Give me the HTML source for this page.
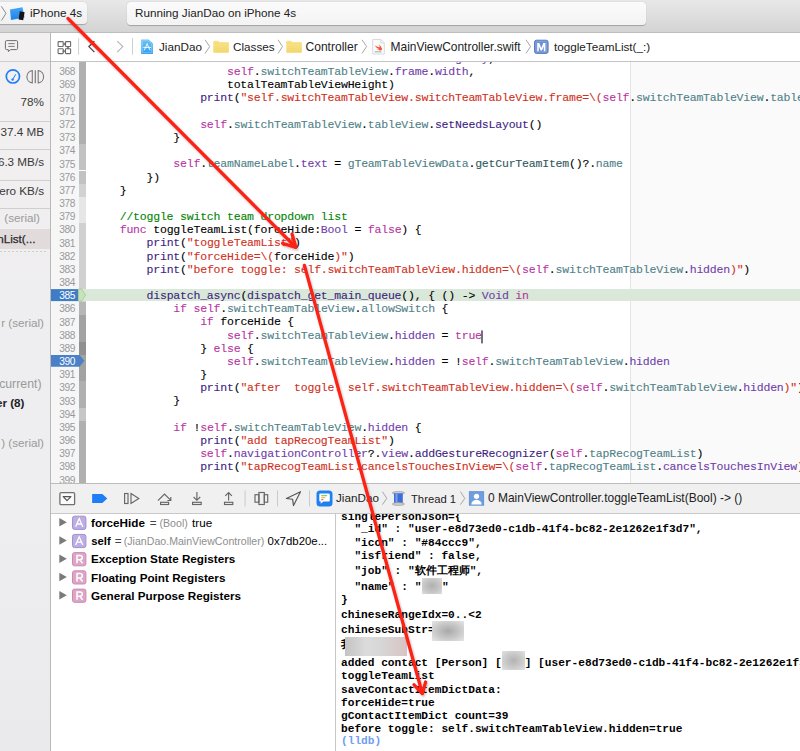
<!DOCTYPE html>
<html><head><meta charset="utf-8">
<style>
*{box-sizing:border-box;margin:0;padding:0}
html,body{width:800px;height:751px;overflow:hidden;background:#fff}
body{position:relative;font-family:"Liberation Sans",sans-serif;font-size:11.7px;color:#222}
.abs{position:absolute}
/* toolbar */
#tb{position:absolute;left:0;top:0;width:800px;height:33px;background:linear-gradient(#e8e8e8,#d4d4d4);border-bottom:1px solid #bdbdbd}
#scheme{position:absolute;left:-6px;top:2px;width:93px;height:22px;border-radius:4px;background:linear-gradient(#f8f8f8,#f0f0f0);box-shadow:0 0.5px 1px rgba(0,0,0,.25)}
#status{position:absolute;left:127px;top:2px;width:519px;height:23px;border-radius:4px;background:linear-gradient(#fbfbfb,#f3f3f3);box-shadow:0 0.5px 1px rgba(0,0,0,.25)}
.ui{position:absolute;white-space:pre;font-family:"Liberation Sans",sans-serif;font-size:11.7px;color:#262626;line-height:14px}
/* left panel */
#lp{position:absolute;left:0;top:33px;width:51px;height:718px;background:linear-gradient(#f2f0f0 0px,#f1eff0 120px,#eeedef 310px,#eeedf0 490px,#eaeaec 718px);border-right:1px solid #b9b9b9;overflow:hidden}
.hl{position:absolute;left:0;width:50px;height:1px;background:#cfcfcf}
.rt{position:absolute;right:6px;white-space:pre;font-size:11.7px;color:#3a3a3a;line-height:14px}
/* jump bar */
#jb{position:absolute;left:51px;top:33px;width:749px;height:29px;background:#fff;border-bottom:1px solid #c4c4c4}
/* editor */
#ed{position:absolute;left:51px;top:62px;width:749px;height:422px;background:#fff;overflow:hidden}
#gut{position:absolute;left:0;top:0;width:28px;height:422px;background:#f6f6f6}
.ln{position:absolute;left:0;margin-top:0.2px;width:24.2px;text-align:right;height:13.17px;line-height:13.17px;font-family:"Liberation Sans",sans-serif;font-size:10.2px;letter-spacing:-0.35px;color:#999}
.rb{position:absolute;left:28px;width:7px;height:13.17px}
#code{position:absolute;left:0;top:0;width:749px;height:422px}
.cl{position:absolute;left:41.86px;white-space:pre;font-family:"Liberation Mono",monospace;font-size:11.5px;letter-spacing:-0.196px;line-height:13.17px;height:13.17px;color:#000;-webkit-text-stroke:0.1px}
/* debug bar */
#db{position:absolute;left:51px;top:483px;width:749px;height:31px;background:#f0f0f0;border-top:1px solid #bcbcbc;border-bottom:1px solid #c9c9c9}
/* variables */
#vars{position:absolute;left:51px;top:514px;width:285px;height:237px;background:#fff;border-right:1px solid #c8c8c8}
.vr{position:absolute;left:0;height:18px;white-space:pre;font-size:11.7px;line-height:14px;color:#000}
#con{position:absolute;left:336px;top:514px;width:464px;height:237px;background:#fff;overflow:hidden}
.co{position:absolute;left:5px;white-space:pre;font-family:"Liberation Mono",monospace;font-weight:bold;font-size:11.16px;line-height:13px;color:#000}
</style></head><body>

<div id="tb">
  <div id="scheme"></div>
  <div id="status"></div>
  <svg class="abs" style="left:0;top:0" width="30" height="32" viewBox="0 0 30 32">
    <path d="M1.3 6.3 L6 13.3 L1.5 20.5" fill="none" stroke="#8a8a8a" stroke-width="1"/>
    <defs><linearGradient id="xg" x1="0" y1="0" x2="0" y2="1"><stop offset="0" stop-color="#45a6f6"/><stop offset="1" stop-color="#1f80ea"/></linearGradient></defs>
    <path d="M10 9.5 L22.5 7.2 L24.5 17.5 L11 20 Z" fill="url(#xg)"/>
    <path d="M19.8 11.3 L24.6 12.3 L23.2 20.2 L18.6 19.4 Z" fill="#151515"/>
  </svg>
  <div class="ui" style="left:30px;top:6.4px;font-size:11.7px;color:#222">iPhone 4s</div>
  <div class="ui" style="left:135px;top:6.2px;font-size:11.7px;color:#222">Running JianDao on iPhone 4s</div>
</div>

<div id="lp">
  <svg class="abs" style="left:0;top:0" width="50" height="60" viewBox="0 0 50 60">
    <path d="M6.6 7.6 H16.4 Q17.6 7.6 17.6 8.8 V15.4 Q17.6 16.6 16.4 16.6 H10.6 L8.4 18.6 L8.3 16.6 H6.6 Q5.4 16.6 5.4 15.4 V8.8 Q5.4 7.6 6.6 7.6 Z" fill="none" stroke="#6f6f6f" stroke-width="1"/>
    <path d="M8.3 10.6 H14.7 M8.3 13.4 H14.7" stroke="#6f6f6f" stroke-width="0.9"/>
    <circle cx="12.9" cy="43.4" r="6.6" fill="none" stroke="#1f7ef5" stroke-width="1.7"/>
    <path d="M12.6 46.6 L15.8 41.2" stroke="#1f7ef5" stroke-width="1"/>
    <circle cx="12.6" cy="46.6" r="1.2" fill="#1f7ef5"/>
    <path d="M32.3 37.6 A6.2 6.2 0 0 0 32.3 49.9 Z" fill="none" stroke="#7a7a7a" stroke-width="1.1"/>
    <path d="M38.2 37.6 A6.2 6.2 0 0 1 38.2 49.9 Z" fill="none" stroke="#7a7a7a" stroke-width="1.1"/>
    <rect x="34.7" y="37.3" width="1.2" height="12.9" fill="#7a7a7a"/>
  </svg>
  <div class="hl" style="top:28px"></div>
  <div class="rt" style="top:61.5px">78%</div>
  <div class="hl" style="top:88px"></div>
  <div class="rt" style="top:91.5px">37.4 MB</div>
  <div class="hl" style="top:116px"></div>
  <div class="rt" style="top:121.5px">6.3 MB/s</div>
  <div class="hl" style="top:147px"></div>
  <div class="rt" style="top:150.5px">Zero KB/s</div>
  <div class="hl" style="top:175px"></div>
  <div class="rt" style="top:177.5px;color:#9a9a9a;right:10px">(serial)</div>
  <div class="abs" style="left:0;top:196px;width:50px;height:20px;background:#e2dbdc"></div>
  <div class="rt" style="top:198.5px;color:#2a2a2a;right:14.5px;-webkit-text-stroke:0.25px">nList(...</div>
  <div class="abs" style="left:0;top:217.5px;width:46px;height:1px;background:repeating-linear-gradient(90deg,#cfcfcf 0 2px,transparent 2px 4px)"></div>
  <div class="rt" style="top:282.5px;color:#9a9a9a;right:6px">r (serial)</div>
  <div class="rt" style="top:343.5px;color:#9a9a9a;right:8.5px;font-size:12.3px">current)</div>
  <div class="rt" style="top:362.5px;color:#222;right:25.5px;font-weight:bold">er (8)</div>
  <div class="rt" style="top:402.5px;color:#9a9a9a;right:6px">) (serial)</div>
</div>

<div id="jb">
  <svg class="abs" style="left:0;top:0" width="749" height="29" viewBox="0 0 749 29">
    <g fill="none" stroke="#6b6b6b" stroke-width="1.1">
      <rect x="7.1" y="8.6" width="5.1" height="4.9" rx="0.6"/>
      <rect x="14.5" y="8.6" width="5.1" height="4.9" rx="0.6"/>
      <rect x="7.1" y="15.7" width="5.1" height="4.9" rx="0.6"/>
      <rect x="14.5" y="15.7" width="5.1" height="4.9" rx="0.6"/>
      <path d="M12.2 11 H14.5 M13.5 10 L14.5 11 L13.5 12 M17 13.5 V15.7 M16 14.7 L17 15.7 L18 14.7 M14.5 18.2 H12.2 M13.2 17.2 L12.2 18.2 L13.2 19.2"/>
    </g>
    <rect x="27.1" y="5.2" width="1" height="16.5" fill="#d0d0d0"/>
    <path d="M43.4 8.2 L37.9 13.6 L43.4 19.1" fill="none" stroke="#4a4a4a" stroke-width="1.3"/>
    <path d="M66.2 8.2 L71.8 13.6 L66.2 19.1" fill="none" stroke="#b3b3b3" stroke-width="1.1"/>
    <rect x="81" y="5.2" width="1" height="16.5" fill="#d0d0d0"/>
    <defs>
      <linearGradient id="apg" x1="0" y1="0" x2="0" y2="1"><stop offset="0" stop-color="#6cc3f7"/><stop offset="1" stop-color="#2f9ef0"/></linearGradient>
      <linearGradient id="fdg" x1="0" y1="0" x2="0" y2="1"><stop offset="0" stop-color="#f9e48c"/><stop offset="1" stop-color="#f3d66a"/></linearGradient>
    </defs>
    <path d="M90.2 6.4 H97.6 L101.9 10.4 V21 H90.2 Z" fill="url(#apg)"/>
    <path d="M91.5 7.7 H97 L100.6 11 V19.7 H91.5 Z" fill="none" stroke="#a9dcfb" stroke-width="0.6" opacity="0.8"/>
    <g fill="none" stroke="#fff" stroke-width="0.9" stroke-linecap="round"><path d="M93.4 17 L96.1 10.9 M96.1 10.9 L98.9 17 M92.6 14.4 H99.6"/></g>
    <path d="M154 6.8 L158.7 13.5 L154 20.5" fill="none" stroke="#a6a6a6" stroke-width="1"/>
    <path d="M162.3 8.6 Q162.3 7.8 163.1 7.8 H167.2 L168.4 9.2 H177.2 Q177.9 9.2 177.9 10 V19.1 Q177.9 19.8 177.2 19.8 H163 Q162.3 19.8 162.3 19.1 Z" fill="url(#fdg)"/>
    <rect x="162.3" y="9.6" width="15.6" height="0.8" fill="#f0d56a" opacity="0.6"/>
    <path d="M227 6.8 L231.5 13.5 L227 20.5" fill="none" stroke="#a6a6a6" stroke-width="1"/>
    <path d="M235.3 8.6 Q235.3 7.8 236.1 7.8 H240.2 L241.4 9.2 H250.2 Q250.9 9.2 250.9 10 V19.1 Q250.9 19.8 250.2 19.8 H236 Q235.3 19.8 235.3 19.1 Z" fill="url(#fdg)"/>
    <rect x="235.3" y="9.6" width="15.6" height="0.8" fill="#f0d56a" opacity="0.6"/>
    <path d="M311 6.8 L315.6 13.5 L311 20.5" fill="none" stroke="#a6a6a6" stroke-width="1"/>
    <path d="M321.7 6.5 H329.8 L333.3 10 V21 H321.7 Z" fill="#fcfcfc" stroke="#d6d6d6" stroke-width="0.9"/>
    <path d="M329.8 6.5 V10 H333.3" fill="none" stroke="#d6d6d6" stroke-width="0.9"/>
    <path d="M323.6 12.6 Q325.5 15.5 328.5 16.2 Q326 16.8 324.5 15.6 Q327 17.8 330.2 17.3 Q331.3 16.8 331 15.8 Q330.3 13.4 327.8 11 Q329.2 13.6 328.4 14.6 Q326 13.6 323.6 12.6 Z" fill="#f05138"/>
    <rect x="323.6" y="18.4" width="7" height="0.9" fill="#9a9a9a"/>
    <path d="M475 6.8 L479.5 13.5 L475 20.5" fill="none" stroke="#a6a6a6" stroke-width="1"/>
    <rect x="483.5" y="7.2" width="13.6" height="13.2" rx="2" fill="#6d90d2" stroke="#5a7fc5" stroke-width="1"/>
    <rect x="485" y="8.7" width="10.6" height="10.2" rx="1" fill="none" stroke="#8eabe0" stroke-width="0.7"/>
    <path d="M486.2 18.2 V10.1 H488.3 L490.3 14.9 L492.3 10.1 H494.4 V18.2 H492.8 V13.2 L491 17.4 H489.6 L487.8 13.2 V18.2 Z" fill="#fff"/>
  </svg>
  <div class="ui" style="left:108px;top:7px;color:#222">JianDao</div>
  <div class="ui" style="left:182px;top:7px;color:#222">Classes</div>
  <div class="ui" style="left:254.5px;top:7px;color:#222;font-size:12.05px">Controller</div>
  <div class="ui" style="left:339.5px;top:7px;color:#222;font-size:11.98px">MainViewController.swift</div>
  <div class="ui" style="left:503px;top:7px;color:#222">toggleTeamList(_:)</div>
</div>

<div id="ed">
  <div class="abs" style="left:579px;top:0;width:170px;height:422px;background:#fafafa;border-left:1px solid #e4e4e4"></div>
  <div id="gut"></div>
<div class="rb" style="top:-10.03px;background:#b0b0b0"></div>
<div class="rb" style="top:3.14px;background:#b0b0b0"></div>
<div class="rb" style="top:16.31px;background:#b0b0b0"></div>
<div class="rb" style="top:29.48px;background:#b0b0b0"></div>
<div class="rb" style="top:42.65px;background:#b0b0b0"></div>
<div class="rb" style="top:55.82px;background:#b0b0b0"></div>
<div class="rb" style="top:68.99px;background:#b0b0b0"></div>
<div class="rb" style="top:82.16px;background:#c2c2c2"></div>
<div class="rb" style="top:95.33px;background:#c2c2c2"></div>
<div class="rb" style="top:108.50px;background:#c2c2c2"></div>
<div class="rb" style="top:121.67px;background:#d2d2d2"></div>
<div class="rb" style="top:134.84px;background:#e6e6e6"></div>
<div class="rb" style="top:148.01px;background:#e6e6e6"></div>
<div class="rb" style="top:161.18px;background:#d0d0d0"></div>
<div class="rb" style="top:174.35px;background:#d0d0d0"></div>
<div class="rb" style="top:187.52px;background:#d0d0d0"></div>
<div class="rb" style="top:200.69px;background:#d0d0d0"></div>
<div class="rb" style="top:213.86px;background:#d0d0d0"></div>
<div class="rb" style="top:227.03px;background:#d0d0d0"></div>
<div class="rb" style="top:240.20px;background:#b6b6b6"></div>
<div class="rb" style="top:253.37px;background:#a2a2a2"></div>
<div class="rb" style="top:266.54px;background:#a2a2a2"></div>
<div class="rb" style="top:279.71px;background:#909090"></div>
<div class="rb" style="top:292.88px;background:#a2a2a2"></div>
<div class="rb" style="top:306.05px;background:#a2a2a2"></div>
<div class="rb" style="top:319.22px;background:#b0b0b0"></div>
<div class="rb" style="top:332.39px;background:#b0b0b0"></div>
<div class="rb" style="top:345.56px;background:#c6c6c6"></div>
<div class="rb" style="top:358.73px;background:#b0b0b0"></div>
<div class="rb" style="top:371.90px;background:#b0b0b0"></div>
<div class="rb" style="top:385.07px;background:#b0b0b0"></div>
<div class="rb" style="top:398.24px;background:#b0b0b0"></div>
<div class="rb" style="top:411.41px;background:#b0b0b0"></div>
  <div class="abs" style="left:28px;top:227.1px;width:721px;height:12px;background:#d9e8d8"></div>
  <svg class="abs" style="left:0;top:0" width="40" height="422" viewBox="0 0 40 422">
    <path d="M0 227.1 H27.6 V239.1 H0 Z" fill="#3f7cc6"/>
    <path d="M27.4 227.1 H30.8 L34.6 233.1 L30.8 239.1 H27.4 Z" fill="#c7e3b9" stroke="#9fc48f" stroke-width="0.7"/>
    <path d="M0 292.9 H28.5 L33.4 298.8 L28.5 304.75 H0 Z" fill="#4a80c6"/>
  </svg>
  <div class="abs" style="left:0;top:0">
<div class="ln" style="top:-10.03px">367</div>
<div class="ln" style="top:3.14px">368</div>
<div class="ln" style="top:16.31px">369</div>
<div class="ln" style="top:29.48px">370</div>
<div class="ln" style="top:42.65px">371</div>
<div class="ln" style="top:55.82px">372</div>
<div class="ln" style="top:68.99px">373</div>
<div class="ln" style="top:82.16px">374</div>
<div class="ln" style="top:95.33px">375</div>
<div class="ln" style="top:108.50px">376</div>
<div class="ln" style="top:121.67px">377</div>
<div class="ln" style="top:134.84px">378</div>
<div class="ln" style="top:148.01px">379</div>
<div class="ln" style="top:161.18px">380</div>
<div class="ln" style="top:174.35px">381</div>
<div class="ln" style="top:187.52px">382</div>
<div class="ln" style="top:200.69px">383</div>
<div class="ln" style="top:213.86px">384</div>
<div class="ln" style="top:227.03px;color:#fff">385</div>
<div class="ln" style="top:240.20px">386</div>
<div class="ln" style="top:253.37px">387</div>
<div class="ln" style="top:266.54px">388</div>
<div class="ln" style="top:279.71px">389</div>
<div class="ln" style="top:292.88px;color:#fff">390</div>
<div class="ln" style="top:306.05px">391</div>
<div class="ln" style="top:319.22px">392</div>
<div class="ln" style="top:332.39px">393</div>
<div class="ln" style="top:345.56px">394</div>
<div class="ln" style="top:358.73px">395</div>
<div class="ln" style="top:371.90px">396</div>
<div class="ln" style="top:385.07px">397</div>
<div class="ln" style="top:398.24px">398</div>
<div class="ln" style="top:411.41px">399</div>
  </div>
  <div id="code">
<div class="cl" style="top:-10.03px">                    <span style="color:#b833a1">self</span>.<span style="color:#4f8187">switchTeamTableView</span>.<span style="color:#703daa">frame</span>.<span style="color:#703daa">origin</span>.<span style="color:#703daa">y</span>,</div>
<div class="cl" style="top:3.14px">                    <span style="color:#b833a1">self</span>.<span style="color:#4f8187">switchTeamTableView</span>.<span style="color:#703daa">frame</span>.<span style="color:#703daa">width</span>,</div>
<div class="cl" style="top:16.31px">                    totalTeamTableViewHeight)</div>
<div class="cl" style="top:29.48px">                <span style="color:#3e1e81">print</span>(<span style="color:#d12f1b">&quot;self.switchTeamTableView.switchTeamTableView.frame=\(</span><span style="color:#b833a1">self</span>.<span style="color:#4f8187">switchTeamTableView</span>.<span style="color:#4f8187">tableView</span>.<span style="color:#703daa">frame</span><span style="color:#d12f1b">)&quot;</span>)</div>
<div class="cl" style="top:42.65px"></div>
<div class="cl" style="top:55.82px">                <span style="color:#b833a1">self</span>.<span style="color:#4f8187">switchTeamTableView</span>.<span style="color:#4f8187">tableView</span>.<span style="color:#3e1e81">setNeedsLayout</span>()</div>
<div class="cl" style="top:68.99px">            }</div>
<div class="cl" style="top:82.16px"></div>
<div class="cl" style="top:95.33px">            <span style="color:#b833a1">self</span>.<span style="color:#4f8187">teamNameLabel</span>.<span style="color:#703daa">text</span> = <span style="color:#4f8187">gTeamTableViewData</span>.<span style="color:#31595d">getCurTeamItem</span>()?.<span style="color:#4f8187">name</span></div>
<div class="cl" style="top:108.50px">        })</div>
<div class="cl" style="top:121.67px">    }</div>
<div class="cl" style="top:134.84px"></div>
<div class="cl" style="top:148.01px">    <span style="color:#008400">//toggle switch team dropdown list</span></div>
<div class="cl" style="top:161.18px">    <span style="color:#b833a1">func</span> toggleTeamList(forceHide:<span style="color:#703daa">Bool</span> = <span style="color:#b833a1">false</span>) {</div>
<div class="cl" style="top:174.35px">        <span style="color:#3e1e81">print</span>(<span style="color:#d12f1b">&quot;toggleTeamList&quot;</span>)</div>
<div class="cl" style="top:187.52px">        <span style="color:#3e1e81">print</span>(<span style="color:#d12f1b">&quot;forceHide=\(</span>forceHide<span style="color:#d12f1b">)&quot;</span>)</div>
<div class="cl" style="top:200.69px">        <span style="color:#3e1e81">print</span>(<span style="color:#d12f1b">&quot;before toggle: self.switchTeamTableView.hidden=\(</span><span style="color:#b833a1">self</span>.<span style="color:#4f8187">switchTeamTableView</span>.<span style="color:#703daa">hidden</span><span style="color:#d12f1b">)&quot;</span>)</div>
<div class="cl" style="top:213.86px"></div>
<div class="cl" style="top:227.03px">        <span style="color:#3e1e81">dispatch_async</span>(<span style="color:#3e1e81">dispatch_get_main_queue</span>(), { () -> <span style="color:#703daa">Void</span> <span style="color:#b833a1">in</span></div>
<div class="cl" style="top:240.20px">            <span style="color:#b833a1">if</span> <span style="color:#b833a1">self</span>.<span style="color:#4f8187">switchTeamTableView</span>.<span style="color:#4f8187">allowSwitch</span> {</div>
<div class="cl" style="top:253.37px">                <span style="color:#b833a1">if</span> forceHide {</div>
<div class="cl" style="top:266.54px">                    <span style="color:#b833a1">self</span>.<span style="color:#4f8187">switchTeamTableView</span>.<span style="color:#703daa">hidden</span> = <span style="color:#b833a1">true</span></div>
<div class="cl" style="top:279.71px">                } <span style="color:#b833a1">else</span> {</div>
<div class="cl" style="top:292.88px">                    <span style="color:#b833a1">self</span>.<span style="color:#4f8187">switchTeamTableView</span>.<span style="color:#703daa">hidden</span> = !<span style="color:#b833a1">self</span>.<span style="color:#4f8187">switchTeamTableView</span>.<span style="color:#703daa">hidden</span></div>
<div class="cl" style="top:306.05px">                }</div>
<div class="cl" style="top:319.22px">                <span style="color:#3e1e81">print</span>(<span style="color:#d12f1b">&quot;after  toggle: self.switchTeamTableView.hidden=\(</span><span style="color:#b833a1">self</span>.<span style="color:#4f8187">switchTeamTableView</span>.<span style="color:#703daa">hidden</span><span style="color:#d12f1b">)&quot;</span>)</div>
<div class="cl" style="top:332.39px">            }</div>
<div class="cl" style="top:345.56px"></div>
<div class="cl" style="top:358.73px">            <span style="color:#b833a1">if</span> !<span style="color:#b833a1">self</span>.<span style="color:#4f8187">switchTeamTableView</span>.<span style="color:#703daa">hidden</span> {</div>
<div class="cl" style="top:371.90px">                <span style="color:#3e1e81">print</span>(<span style="color:#d12f1b">&quot;add tapRecogTeamList&quot;</span>)</div>
<div class="cl" style="top:385.07px">                <span style="color:#b833a1">self</span>.<span style="color:#703daa">navigationController</span>?.<span style="color:#703daa">view</span>.<span style="color:#3e1e81">addGestureRecognizer</span>(<span style="color:#b833a1">self</span>.<span style="color:#4f8187">tapRecogTeamList</span>)</div>
<div class="cl" style="top:398.24px">                <span style="color:#3e1e81">print</span>(<span style="color:#d12f1b">&quot;tapRecogTeamList.cancelsTouchesInView=\(</span><span style="color:#b833a1">self</span>.<span style="color:#4f8187">tapRecogTeamList</span>.<span style="color:#703daa">cancelsTouchesInView</span><span style="color:#d12f1b">)&quot;</span>)</div>
<div class="cl" style="top:411.41px"></div>
  </div>
</div>

<div id="db">
  <div class="ui" style="left:285px;top:7.3px;color:#222">JianDao</div>
  <div class="ui" style="left:360px;top:7.5px;color:#222;font-size:11.25px">Thread 1</div>
  <div class="ui" style="left:437px;top:7.1px;color:#222;font-size:11.98px">0 MainViewController.toggleTeamList(Bool) -&gt; ()</div>
</div>

<div id="vars">
  <div class="vr" style="top:2px;left:40px"><b>forceHide</b></div>
  <div class="vr" style="top:2px;left:98.7px;color:#444">=</div>
  <div class="vr" style="top:2.2px;left:108.5px;color:#8e8e8e;font-size:10.6px">(Bool)</div>
  <div class="vr" style="top:2px;left:141px">true</div>
  <div class="vr" style="top:20.2px;left:40.2px;font-size:11.3px"><b>self</b></div>
  <div class="vr" style="top:20.2px;left:63.7px;color:#444">=</div>
  <div class="vr" style="top:20.4px;left:72.8px;color:#8e8e8e;font-size:10.6px">(JianDao.MainViewController)</div>
  <div class="vr" style="top:20.4px;left:216.6px;font-size:11.4px">0x7db20e...</div>
  <div class="vr" style="top:38.4px;left:40px"><b>Exception State Registers</b></div>
  <div class="vr" style="top:56.6px;left:40px"><b>Floating Point Registers</b></div>
  <div class="vr" style="top:74.8px;left:40px"><b>General Purpose Registers</b></div>
</div>

<div id="con">
  <div class="co" style="top:-3.5px">singlePersonJson={</div>
  <div class="co" style="top:9px">  "_id" : "user-e8d73ed0-c1db-41f4-bc82-2e1262e1f3d7",</div>
  <div class="co" style="top:22.7px">  "icon" : "#84ccc9",</div>
  <div class="co" style="top:35.6px">  "isfriend" : false,</div>
  <div class="co" style="top:51px">  "job" : "软件工程师",</div>
  <div class="co" style="top:67px">  "name" : "<span style="display:inline-block;width:20.7px"></span>"</div>
  <div class="co" style="top:80px">}</div>
  <div class="co" style="top:95px">chineseRangeIdx=0..&lt;2</div>
  <div class="co" style="top:110px">chineseSubStr=</div>
  <div class="co" style="top:125px">我</div>
  <div class="co" style="top:142.5px">added contact [Person] [<span style="display:inline-block;width:23px"></span>] [user-e8d73ed0-c1db-41f4-bc82-2e1262e1f3d7]</div>
  <div class="co" style="top:156.4px">toggleTeamList</div>
  <div class="co" style="top:169.7px">saveContactItemDictData:</div>
  <div class="co" style="top:182.8px">forceHide=true</div>
  <div class="co" style="top:195.8px">gContactItemDict count=39</div>
  <div class="co" style="top:208.5px">before toggle: self.switchTeamTableView.hidden=true</div>
  <div class="co" style="top:221.2px;color:#6e9ef0">(lldb)</div>
</div>


<svg class="abs" style="left:0;top:0" width="800" height="751" viewBox="0 0 800 751">
  <!-- debug bar -->
  <rect x="59.9" y="492.6" width="14.7" height="12" rx="1.2" fill="#fafafa" stroke="#707070" stroke-width="1.3"/>
  <path d="M63.2 496.7 H70.9 L67 500.6 Z" fill="none" stroke="#555" stroke-width="1.2" stroke-linejoin="round"/>
  <path d="M92.1 494 H102.4 L107.2 498.5 L102.4 503 H92.1 Z" fill="#1f7ef5"/>
  <g fill="none" stroke="#666" stroke-width="1.15">
    <rect x="124.6" y="493.5" width="3.4" height="10"/>
    <path d="M131 493.6 L138.8 498.5 L131 503.4 Z"/>
    <path d="M157.9 500.7 L164.5 494.1 L170.6 500.2 M167.4 500.5 H170.8 V497"/>
    <rect x="160.6" y="502.3" width="8" height="2.2"/>
    <path d="M196.9 492.1 V500.2 M193.6 497 L196.9 500.3 L200.2 497"/>
    <rect x="192.6" y="502.3" width="8.6" height="2.2"/>
    <path d="M228.6 492.6 V500.5 M225.3 495.9 L228.6 492.6 L231.9 495.9"/>
    <rect x="224.5" y="502.3" width="8.3" height="2.2"/>
    <rect x="258.9" y="492.5" width="5.4" height="12"/>
    <rect x="255" y="494.7" width="3.9" height="7.5"/>
    <rect x="264.3" y="494.7" width="3.4" height="7.5"/>
  </g>
  <path d="M286.4 498.5 L300.5 491.7 L293.5 505.6 L292.6 499.3 Z" fill="none" stroke="#555" stroke-width="1.15" stroke-linejoin="round"/>
  <rect x="244.6" y="490.4" width="1" height="16" fill="#cacaca"/>
  <rect x="277" y="490.4" width="1" height="16" fill="#cacaca"/>
  <rect x="309" y="490.4" width="1" height="16" fill="#cacaca"/>
  <rect x="316.5" y="490.4" width="16" height="16.2" rx="3.6" fill="#1f80f2"/>
  <path d="M320.3 493.6 H328.8 Q329.8 493.6 329.8 494.6 V500.6 Q329.8 501.6 328.8 501.6 H323.4 L320.6 503.8 L320.9 501.6 H320.3 Q319.3 501.6 319.3 500.6 V494.6 Q319.3 493.6 320.3 493.6 Z" fill="#fff"/>
  <rect x="321.2" y="495.2" width="6" height="1" fill="#5ec46a"/>
  <rect x="321.2" y="497.2" width="4" height="1" fill="#f5a623"/>
  <rect x="321.2" y="499.2" width="2.2" height="1" fill="#e8473c"/>
  <path d="M382.4 491.6 L386.8 498.4 L382.4 504.6 M460.4 491.6 L464.8 498.4 L460.4 504.6" fill="none" stroke="#a6a6a6" stroke-width="1"/>
  <ellipse cx="398.4" cy="492.9" rx="6.2" ry="1.5" fill="#c9c9c9" stroke="#9a9a9a" stroke-width="0.6"/>
  <rect x="394" y="493.3" width="8.8" height="10.6" fill="#3d6fd8"/>
  <rect x="395.5" y="493.3" width="2" height="10.6" fill="#7aa0ee"/>
  <ellipse cx="398.4" cy="504" rx="6.2" ry="1.5" fill="#c9c9c9" stroke="#9a9a9a" stroke-width="0.6"/>
  <rect x="469.3" y="491.7" width="14.4" height="13.5" fill="#6f9ede" stroke="#5b8bd2" stroke-width="0.8"/>
  <circle cx="476.5" cy="496.3" r="2.6" fill="#fff"/>
  <path d="M471.3 504.6 Q471.6 500.2 476.5 499.8 Q481.4 500.2 481.7 504.6 Z" fill="#fff"/>
  <!-- variables -->
  <g fill="#7a7a7a">
    <path d="M59.3 518 L66.8 522.2 L59.3 526.5 Z"/>
    <path d="M59.3 536.2 L66.8 540.4 L59.3 544.7 Z"/>
    <path d="M59.3 554.5 L66.8 558.7 L59.3 563 Z"/>
    <path d="M59.3 572.7 L66.8 576.9 L59.3 581.2 Z"/>
    <path d="M59.3 591 L66.8 595.2 L59.3 599.5 Z"/>
  </g>
  <g stroke-width="1">
    <rect x="72.5" y="516.2" width="13.4" height="13.2" rx="2" fill="#bcaede" stroke="#a48fd1"/>
    <rect x="72.5" y="534.4" width="13.4" height="13.2" rx="2" fill="#bcaede" stroke="#a48fd1"/>
    <rect x="72.5" y="552.6" width="13.4" height="13.2" rx="2" fill="#dca6c6" stroke="#cd89b4"/>
    <rect x="72.5" y="570.8" width="13.4" height="13.2" rx="2" fill="#dca6c6" stroke="#cd89b4"/>
    <rect x="72.5" y="589.1" width="13.4" height="13.2" rx="2" fill="#dca6c6" stroke="#cd89b4"/>
  </g>
  <g fill="none" stroke="#fff" stroke-width="1.3">
    <path d="M75.6 526.8 L79.2 518.6 L82.8 526.8 M76.8 524 H81.6"/>
    <path d="M75.6 545 L79.2 536.8 L82.8 545 M76.8 542.2 H81.6"/>
  </g>
  <g fill="none" stroke="#fff" stroke-width="1.5">
    <path d="M77 563.2 V555.4 H80 Q82.3 555.4 82.3 557.6 Q82.3 559.8 80 559.8 H77 M79.8 559.8 L82.6 563.2"/>
    <path d="M77 581.4 V573.6 H80 Q82.3 573.6 82.3 575.8 Q82.3 578 80 578 H77 M79.8 578 L82.6 581.4"/>
    <path d="M77 599.7 V591.9 H80 Q82.3 591.9 82.3 594.1 Q82.3 596.3 80 596.3 H77 M79.8 596.3 L82.6 599.7"/>
  </g>
  <!-- text cursor -->
  <rect x="481.3" y="330.4" width="1.4" height="13" fill="#3a3a3a"/>
</svg>

<div class="abs" style="left:422px;top:578px;width:20px;height:15.5px;background:radial-gradient(ellipse at center,#b0b0b0 0%,#c8c8c8 60%,#dedede 100%)"></div>
<div class="abs" style="left:432px;top:620.7px;width:32px;height:20.8px;background:radial-gradient(ellipse at center,#a9a9a9 0%,#c9c9c9 55%,#e6e6e6 100%)"></div>
<div class="abs" style="left:502.3px;top:651.3px;width:22.7px;height:18.5px;background:radial-gradient(ellipse at center,#b3b3b3 0%,#cbcbcb 55%,#e2e2e2 100%)"></div>
<div class="abs" style="left:344.7px;top:637px;width:62.3px;height:18.6px;background:linear-gradient(90deg,#c3c3c3,#dcdcdc 35%,#d6d6d6 60%,#d9c3c3)"></div>

<svg id="arr" class="abs" style="left:0;top:0" width="800" height="751" viewBox="0 0 800 751">
  <defs><filter id="sh" x="-10%" y="-10%" width="120%" height="120%"><feDropShadow dx="1" dy="1.5" stdDeviation="1" flood-color="#000" flood-opacity="0.25"/></filter></defs>
  <g stroke="#fd2417" stroke-width="3.3" stroke-linecap="round" stroke-linejoin="round" fill="none" filter="url(#sh)">
    <path d="M68 18.5 L295.5 247"/>
    <path d="M292 234 L295.9 247.3 L282.6 243.3"/>
    <path d="M304.4 265.4 L422.2 693"/>
    <path d="M414 684.8 L422.4 693.6 L425.6 682"/>
  </g>
</svg>
</body></html>
